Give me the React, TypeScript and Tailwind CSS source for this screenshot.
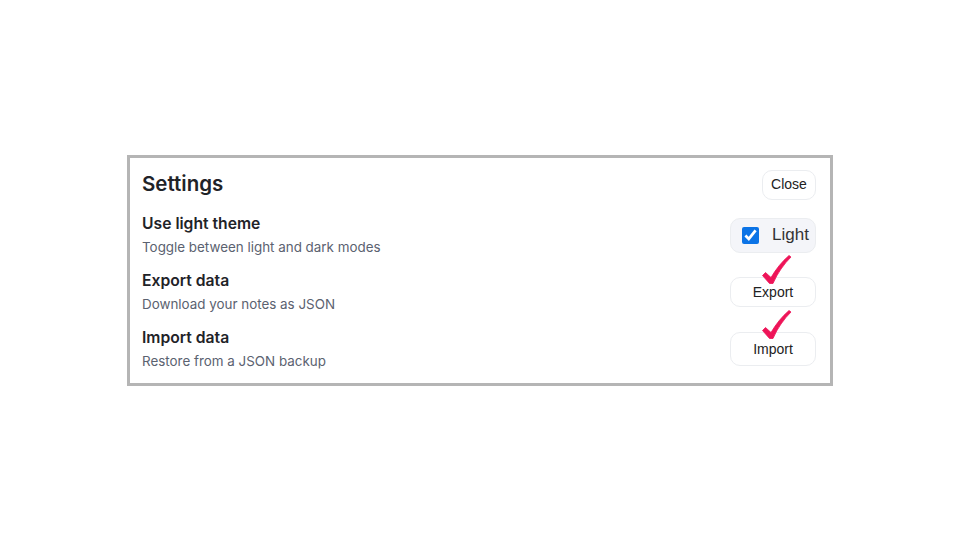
import React from 'react';

const Check: React.FC = () => (
  <svg
    className="absolute left-[31px] top-[-23px] pointer-events-none"
    width="31"
    height="31"
    viewBox="0 0 31 31"
    fill="none"
  >
    <path
      d="M1.5 21.5 L4.5 18.5 L10 23.5 C15 15 21 7.5 28 1.5 L30 3 C23 10 16.5 19 12 29.5 L8.5 29.5 Z"
      fill="#ee1458"
      stroke="#ee1458"
      strokeWidth="0.8"
      strokeLinejoin="round"
    />
  </svg>
);

const Row: React.FC<{ title: string; desc: string; children: React.ReactNode }> = ({ title, desc, children }) => (
  <div className="flex items-center justify-between">
    <div className="flex flex-col">
      <span className="text-[15.7px] leading-5 font-semibold text-[#1f2328]">{title}</span>
      <span className="mt-[3px] text-[13.4px] leading-5 text-[#5b6270]">{desc}</span>
    </div>
    {children}
  </div>
);

export default function App() {
  return (
    <div className="h-screen w-full bg-white flex items-center justify-center font-['Inter',sans-serif]">
      <div className="w-[706px] border-[3px] border-[#b5b5b5] bg-white pl-3 pr-[14px] py-3 flex flex-col gap-[14px]">
        <div className="flex items-center justify-between h-[30px]">
          <h2 className="text-[20.5px] font-semibold text-[#1f2328]">Settings</h2>
          <button className="h-[30px] w-[54px] rounded-[10px] border border-[#ebedf0] bg-white text-[14px] text-[#222] font-['Liberation_Sans',Arial,sans-serif]">
            Close
          </button>
        </div>
        <Row title="Use light theme" desc="Toggle between light and dark modes">
          <label className="h-[35px] w-[86px] rounded-[10px] border border-[#ebedf0] bg-[#f4f5f9] flex items-center gap-[13px] pl-[11px] font-['Liberation_Sans',Arial,sans-serif]">
            <input type="checkbox" defaultChecked className="w-[17px] h-[17px] m-0 accent-[#0b73e6]" />
            <span className="text-[17px] text-[#333]">Light</span>
          </label>
        </Row>
        <Row title="Export data" desc="Download your notes as JSON">
          <div className="relative">
            <button className="h-[30px] w-[86px] rounded-[10px] border border-[#ebedf0] bg-white text-[14px] text-[#222] font-['Liberation_Sans',Arial,sans-serif]">
              Export
            </button>
            <Check />
          </div>
        </Row>
        <Row title="Import data" desc="Restore from a JSON backup">
          <div className="relative">
            <button className="h-[34px] w-[86px] rounded-[10px] border border-[#ebedf0] bg-white text-[14px] text-[#222] font-['Liberation_Sans',Arial,sans-serif]">
              Import
            </button>
            <Check />
          </div>
        </Row>
      </div>
    </div>
  );
}
